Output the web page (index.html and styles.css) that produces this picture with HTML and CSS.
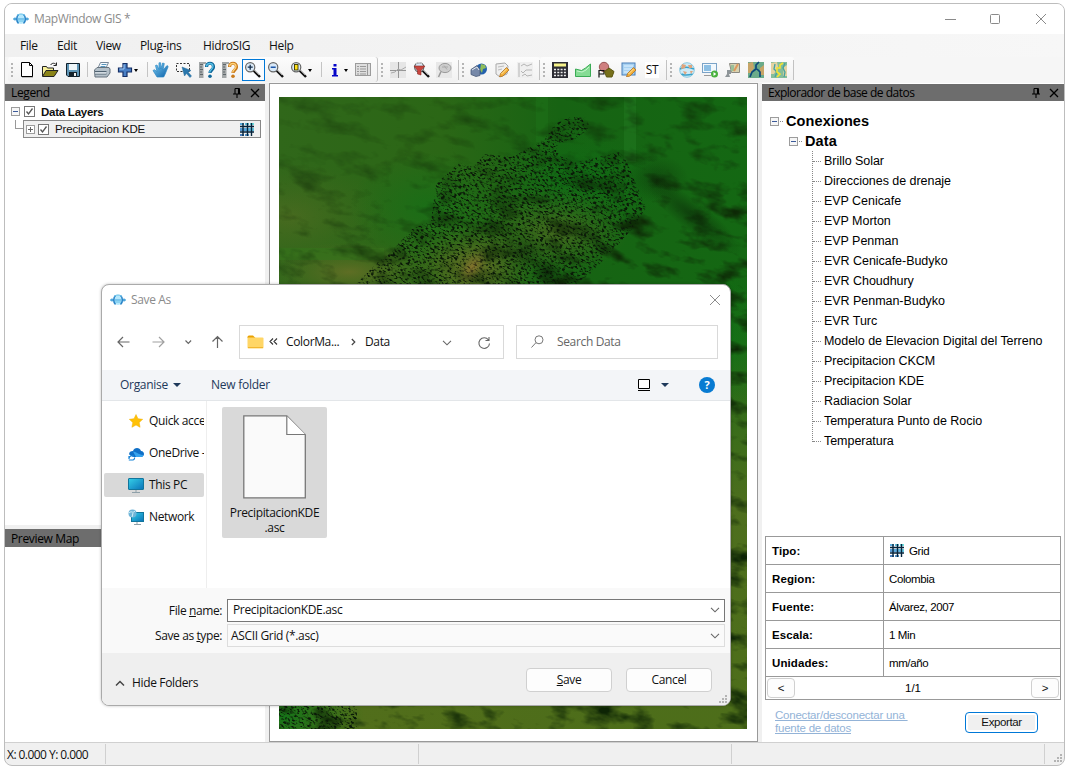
FILE: index.html
```html
<!DOCTYPE html>
<html lang="es">
<head>
<meta charset="utf-8">
<title>MapWindow GIS</title>
<link rel="stylesheet" href="styles.css">
</head>
<body>
<svg class="defs" width="0" height="0">
  <defs>
    <linearGradient id="gBlue" x1="0" y1="0" x2="1" y2="1"><stop offset="0" stop-color="#7fd0f5"/><stop offset="1" stop-color="#0a5fa8"/></linearGradient>
    <linearGradient id="gScreen" x1="0" y1="0" x2="1" y2="1"><stop offset="0" stop-color="#35d0e8"/><stop offset="1" stop-color="#0a72b8"/></linearGradient>
    <linearGradient id="gGrid" x1="1" y1="0" x2="0" y2="1"><stop offset="0" stop-color="#3fe0d8"/><stop offset=".5" stop-color="#2a96d8"/><stop offset="1" stop-color="#0b4fa8"/></linearGradient>
    <symbol id="logo" viewBox="0 0 16 14">
      <path d="M0 7h16" stroke="#5fb4e0" stroke-width="1.400"/>
      <path d="M2 5.500v3M14 5.500v3" stroke="#2f8fd0" stroke-width="1.200"/>
      <ellipse cx="8" cy="7" rx="4.600" ry="5" fill="#b6e8fc"/>
      <path d="M5.500 2.500C3.200 4.500 3.200 9.500 5.500 11.500M10.500 2.500c2.500 2 2.500 7 0 9" fill="none" stroke="#2a84c8" stroke-width="1.600"/>
      <path d="M4 3.500C6 1.500 10 1.500 12 3.500M5 9h6" fill="none" stroke="#63bfe9"/>
      <path d="M5 7h6" stroke="#3fa3dc"/>
    </symbol>
    <symbol id="grid" viewBox="0 0 14 13">
      <path d="M0 0h4v2H0zM5 0h4v2H5zM10 0h4v2h-4zM0 11h4v2H0zM5 11h4v2H5zM0 5h14v3H0z" fill="url(#gGrid)" opacity=".75"/>
      <path d="M3 0v13M7.500 0v13M11.500 0v13M0 3.500h14M0 9h14" stroke="#06243c" stroke-width="1.400"/>
    </symbol>
    <symbol id="lens" viewBox="0 0 18 18">
      <path d="M9.500 9.500L16 16" stroke="#111" stroke-width="2.400"/>
      <path d="M10 9l5 5" stroke="#bbb" stroke-width=".8"/>
      <circle cx="6.200" cy="6.200" r="4.600" fill="#d9e9f8" stroke="#666" stroke-width="1.200"/>
    </symbol>
    <symbol id="pencil" viewBox="0 0 10 10">
      <path d="M0 10l1-3.500L7 .5l2.500 2.500-6 6z" fill="#f4b13c" stroke="#a8681a" stroke-width=".7"/><path d="M2 7l5-5" stroke="#ffe6a0"/>
    </symbol>
    <symbol id="question" viewBox="0 0 18 18">
      <path d="M1 1h7v2H5.500v14H1z" fill="#a3a7a8"/><path d="M2 3.500h3M2 6h2M2 8.500h3M2 11h2M2 13.500h3" stroke="#5f676b"/>
      <path d="M8.500 6c0-5 7-5 7 0 0 3-3.500 3-3.500 6" fill="none" stroke-width="3.200" class="q-out"/>
      <path d="M8.500 5.500c.3-4 6.500-4 6.500 0 0 3-3.300 3-3.300 6" fill="none" stroke-width="1.300" class="q-in"/>
      <circle cx="12" cy="15.300" r="1.800" class="q-dot"/>
    </symbol>
    <symbol id="pin" viewBox="0 0 8 10"><path d="M2 .5h4.500M2 .5v5M5.500 .5v5M6.500 .5v5M0 6h8M4 6v4" fill="none" stroke="#000" stroke-width="1.100"/></symbol>
    <symbol id="close" viewBox="0 0 10 10"><path d="M1 1l8 8M9 1L1 9" stroke="#000" stroke-width="1.300"/></symbol>
    <symbol id="chev" viewBox="0 0 10 6"><path d="M1 .8l4 4 4-4" fill="none" stroke="#666" stroke-width="1.100"/></symbol>
    <symbol id="check" viewBox="0 0 11 11"><rect x=".5" y=".5" width="10" height="10" fill="#fff" stroke="#777"/><path d="M2.500 5.500l2 2.500 4-5.500" fill="none" stroke="#555" stroke-width="1.300"/></symbol>
    <symbol id="minus" viewBox="0 0 9 9"><rect x=".5" y=".5" width="8" height="8" fill="#f6f6f6" stroke="#9c9c9c"/><path d="M2 4.500h5" stroke="#3b5a9a"/></symbol>
    <symbol id="plus" viewBox="0 0 9 9"><rect x=".5" y=".5" width="8" height="8" fill="#fff" stroke="#9c9c9c"/><path d="M2 4.500h5M4.500 2v5" stroke="#666"/></symbol>
  </defs>
</svg>

<div class="window">
  <header class="titlebar">
    <svg class="logo" width="16" height="14"><use href="#logo"/></svg>
    <span class="title-text">MapWindow GIS *</span>
    <svg class="win-buttons" width="104" height="12" fill="none" stroke="#8a8a8a"><path d="M1 6.500h11M92 1l10 10M102 1L92 11"/><rect x="46.500" y="1.500" width="9" height="9" rx="1"/></svg>
  </header>
  <nav class="menubar">
    <span class="m-file">File</span><span class="m-edit">Edit</span><span class="m-view">View</span><span class="m-plug">Plug-ins</span><span class="m-hidro">HidroSIG</span><span class="m-help">Help</span>
  </nav>
  <div class="toolbar">
    <div class="strip strip-main">
      <i class="grip"></i>
      <span class="cell"><svg width="18" height="18"><path d="M4 2.500h8l3 3v11H4z" fill="#888"/><path d="M3.500 1.500h8l3 3v11h-11z" fill="#fff" stroke="#000"/><path d="M11.500 1.500v3h3" fill="none" stroke="#000"/></svg></span>
      <span class="cell"><svg width="18" height="18"><path d="M1.500 15V5.500h4l1 1.500h6v3" fill="#f7f09a" stroke="#222"/><path d="M1.500 15.500l3.500-6h12l-4 6z" fill="#8b8418" stroke="#222"/><path d="M9.500 4c2-2.500 4-2 5.500-.5M15.500 1.500V4.500H12.500" fill="none" stroke="#222"/></svg></span>
      <span class="cell"><svg width="18" height="18"><path d="M2.500 2.500h13v13H4l-1.500-1.500z" fill="#5f95b5" stroke="#10202c"/><rect x="5" y="3" width="8" height="6" fill="#eef6f9"/><rect x="5" y="11" width="8" height="4.500" fill="#16222a"/><rect x="10" y="12" width="2" height="3" fill="#eee"/></svg></span>
      <i class="sep"></i>
      <span class="cell"><svg width="18" height="18"><path d="M5 7l2.500-5.500h8L13 7" fill="#f7fbff" stroke="#789"/><path d="M1.500 9l2.500-2.500h12l1 1.500v4l-3 4h-12z" fill="#b4c0c9" stroke="#66737e"/><path d="M2 10.500h11.500M2 13h11.500" stroke="#506271"/><path d="M2 12h11" stroke="#eef4f8"/><path d="M8.500 3.500h5M7.500 5.500h5" stroke="#5796bd"/></svg></span>
      <span class="cell drop"><svg width="18" height="18"><path d="M7 2.500h4V7h4.500v4H11v4.500H7V11H2.500V7H7z" fill="#4a80c5" stroke="#152f66" stroke-width="1.200"/><path d="M8 3.500V8H3.500" fill="none" stroke="#a4ccf4"/></svg><b class="caret"></b></span>
      <i class="sep sep-r"></i>
      <span class="cell"><svg width="18" height="18"><path d="M5 16L1 9.500l1.500-.8 2.500 2L3.500 4.500l1.500-.5L7 8.500V1.800h1.700V8l2-6 1.600.5L11 9l4-4.500 1.200 1-3 7.500-1.500 3z" fill="url(#gBlue)" stroke="#2a86c4" stroke-width=".7"/></svg></span>
      <span class="cell"><svg width="18" height="18"><rect x="1.500" y="2.500" width="13" height="8" fill="none" stroke="#333" stroke-dasharray="2 1.500"/><path d="M7 6l9 3.500-3 1.500 3.500 4-1.500 1.500-3.500-4L9.500 15z" fill="#2a77ad" stroke="#286e9d" stroke-width=".5"/></svg></span>
      <span class="cell q-blue"><svg width="18" height="18"><use href="#question"/></svg></span>
      <span class="cell q-gold"><svg width="18" height="18"><use href="#question"/></svg></span>
      <span class="cell active"><svg width="18" height="18"><use href="#lens"/><path d="M3.700 6.200h5M6.200 3.700v5" stroke="#152d4a" stroke-width="1.300"/></svg></span>
      <span class="cell"><svg width="18" height="18"><use href="#lens"/><path d="M3.700 6.200h5" stroke="#1b55a8" stroke-width="1.500"/></svg></span>
      <span class="cell drop"><svg width="18" height="18"><use href="#lens"/><rect x="4.500" y="3.500" width="3.500" height="5.500" fill="#ffe21a" stroke="#3c3600" stroke-width=".9"/></svg><b class="caret"></b></span>
      <i class="sep sep-r"></i>
      <span class="cell drop info"><svg width="18" height="18"><path d="M7.500 3h3v2.500h-3zM6 7h4.500v7H12v1.500H6V14h1.500V8.500H6z" fill="#0505c8"/></svg><b class="caret"></b></span>
      <span class="cell"><svg width="18" height="18"><rect x="1.500" y="2.500" width="15" height="12" fill="#dedede" stroke="#9b9b9b"/><path d="M3 5.500h2M6 5.500h6M3 8h2M6 8h6M3 10.500h2M6 10.500h6M3 13h2M6 13h6M13.500 3v11" stroke="#999"/></svg></span>
    </div>
    <div class="strip strip-3">
      <i class="grip"></i>
      <span class="cell"><svg width="18" height="18"><rect x="1" y="1" width="16" height="16" fill="#e6e6e6"/><path d="M1 9.500h16M9.500 1v16" stroke="#959595"/><path d="M2 12l4-1 3-3 3 1 5-3" fill="none" stroke="#aaa"/></svg></span>
      <span class="cell"><svg width="18" height="18"><use href="#lens" x="1"/><path d="M2 5h11L9 9.500V14l-3.500-1V9.500z" fill="#c9453e" stroke="#8c2c27" stroke-width=".6"/><path d="M4 3c1-2 5-2 6 0" stroke="#ddd" fill="none"/></svg></span>
      <span class="cell"><svg width="18" height="18"><rect x="1" y="1" width="16" height="16" fill="#e8e8e8"/><ellipse cx="10" cy="7" rx="6" ry="4.600" fill="#cdcdcd" stroke="#9c9c9c"/><path d="M6 10.500L3.500 16" stroke="#999" stroke-width="1.500"/><path d="M7 6h6M9 4.500l3 4" stroke="#aaa"/></svg></span>
      <i class="edge"></i>
    </div>
    <div class="strip strip-3">
      <i class="grip"></i>
      <span class="cell"><svg width="18" height="18"><circle cx="11.500" cy="8" r="5.500" fill="#2461ad"/><path d="M11 3l4 1 1 3-3 1-1 4-2-3z" fill="#8fbd5a"/><path d="M1 8.500l6-4 3 4v6l-4 1-5-2z" fill="#7688a8" stroke="#4a5a78" stroke-width=".8"/><path d="M2 9l5-3 2 3" stroke="#dde6ef" fill="none"/></svg></span>
      <span class="cell"><svg width="18" height="18"><path d="M3 3l9-1 3 3-1 8-7 3-4-3z" fill="#efefef" stroke="#aaa"/><path d="M5 6l6-1M5 9l4-1" stroke="#bbb"/><use href="#pencil" x="6" y="6" width="11" height="10"/></svg></span>
      <span class="cell"><svg width="18" height="18"><rect x="1" y="1" width="16" height="16" fill="#efefef"/><path d="M3 2v14M5 5l3-2 3 2 5-2M5 10l2 2 3-3h6M6 15l3-2 2 2 5-1" fill="none" stroke="#b5b5b5"/></svg></span>
      <i class="edge"></i>
    </div>
    <div class="strip strip-5">
      <i class="grip"></i>
      <span class="cell"><svg width="18" height="18"><rect x="1" y="1" width="16" height="16" fill="#2c2c34"/><rect x="3" y="2.500" width="12" height="3" fill="#f6f28a"/><path d="M3 8.500h12M3 11.500h12M3 14.500h12" stroke="#ececec" stroke-width="1.700" stroke-dasharray="2 1.300"/></svg></span>
      <span class="cell"><svg width="18" height="18"><path d="M1.500 15.500V8l6 1.500 4-2.500 5-4v12.500z" fill="#85dc94" stroke="#3aab55"/><path d="M3 10l5 1 4-2 3-3" fill="none" stroke="#c6f5cc"/></svg></span>
      <span class="cell"><svg width="18" height="18"><circle cx="7" cy="6" r="4.700" fill="#cf8080" stroke="#955"/><path d="M2 16.500v-7h5v3.500H2" fill="none" stroke="#111" stroke-width="1.200"/><path d="M12 7l5 3.500-2 5.500H9.500l-2-5.500z" fill="#77701b" stroke="#5d5812"/></svg></span>
      <span class="cell"><svg width="18" height="18"><rect x="2" y="2" width="13" height="12" fill="#a8d2f2" stroke="#4a7fb8"/><path d="M4 5h9M4 8h8M4 11h5" stroke="#e2f3ff"/><use href="#pencil" x="6" y="6" width="11" height="10"/></svg></span>
      <span class="cell"><span class="st">ST</span></span>
      <i class="edge"></i>
    </div>
    <div class="strip strip-5">
      <i class="grip"></i>
      <span class="cell"><svg width="18" height="18"><circle cx="9" cy="9" r="7.300" fill="#cdeaf6" stroke="#8cc8de"/><path d="M2 8c5-3 9-2 14 0M3.500 13c4 2 8 1 11 0" fill="none" stroke="#38a3cc" stroke-width="1.500"/><path d="M4 3l4 1-1 3-4 1zM10 4h4v3h-3zM5 10l4 1-2 3zM12 10l3 0-2 3z" fill="#e0a57d"/></svg></span>
      <span class="cell"><svg width="18" height="18"><rect x="1.500" y="2.500" width="14" height="9" fill="#f2f8fc" stroke="#7ba3c7"/><path d="M3 4h7v6H3z" fill="#8cbfe4"/><path d="M3 14.500h7" stroke="#999"/><circle cx="13.500" cy="13" r="3.500" fill="#48b13d"/><path d="M12.500 11v4l2.800-2z" fill="#fff"/></svg></span>
      <span class="cell"><svg width="18" height="18"><path d="M5.500 2.500h10v9h-8z" fill="#d8d2b0" stroke="#8b8a82"/><path d="M7 4h3v6H7z" fill="#9bc09a"/><path d="M10 10l4-7" stroke="#dd9a5e" stroke-width="2"/><path d="M3 9h4v4H3zM3 13l-2 3h5l-1-3z" fill="#8e9598"/></svg></span>
      <span class="cell"><svg width="18" height="18"><path d="M1 1h16v16H1z" fill="#6bab8a"/><path d="M1 2l5-1 1 6-3 5H1zM13 7l4-3v10h-4z" fill="#c7a567"/><path d="M12 1L9 4v4l-4 3-2 5M10 8l3 3v5" fill="none" stroke="#0d4779" stroke-width="1.700"/></svg></span>
      <span class="cell"><svg width="18" height="18"><path d="M1 1h16v16H1z" fill="#85bd9a"/><path d="M1 2l6-1 1 5-4 7H1zM14 6l3-2v11h-4z" fill="#e5d3a0"/><path d="M5 3l-1 5 3 3-2 5M15 2l-2 5 2 4-1 5" fill="none" stroke="#45a3a0" stroke-width="1.300"/><path d="M13 2l-3 2v3H7v4l3 2-3 3" fill="none" stroke="#f2e332" stroke-width="1.600"/></svg></span>
      <i class="edge"></i>
    </div>
  </div>

  <main class="workspace">
    <aside class="left">
      <section class="legend">
        <div class="pane-head"><span class="h-legend">Legend</span><svg width="8" height="10"><use href="#pin"/></svg><svg width="10" height="10"><use href="#close"/></svg></div>
        <div class="layer-root"><svg width="9" height="9"><use href="#minus"/></svg><svg width="11" height="11"><use href="#check"/></svg><b class="t-layers">Data Layers</b></div>
        <div class="layer-line">
          <i class="elbow"></i>
          <div class="layer"><svg width="9" height="9"><use href="#plus"/></svg><svg width="11" height="11"><use href="#check"/></svg><span class="t-kde">Precipitacion KDE</span><svg class="layer-grid" width="14" height="13"><use href="#grid"/></svg></div>
        </div>
      </section>
      <section class="preview"><div class="pane-head"><span class="h-preview">Preview Map</span></div></section>
    </aside>

    <section class="map-frame">
      <svg class="map" width="468" height="632" viewBox="0 0 468 632">
        <defs>
          <linearGradient id="base" x1="0" y1="0" x2="1" y2="0"><stop offset="0" stop-color="#30671a"/><stop offset=".35" stop-color="#2b6716"/><stop offset=".6" stop-color="#176313"/><stop offset="1" stop-color="#146813"/></linearGradient>
          <linearGradient id="low" x1="0" y1="0" x2="0" y2="1"><stop offset=".3" stop-color="#5f7222" stop-opacity="0"/><stop offset=".65" stop-color="#5c7020" stop-opacity=".8"/><stop offset="1" stop-color="#576f1b" stop-opacity=".85"/></linearGradient>
          <radialGradient id="warm"><stop offset="0" stop-color="#a77836" stop-opacity=".8"/><stop offset="1" stop-color="#74682a" stop-opacity="0"/></radialGradient>
          <radialGradient id="green"><stop offset="0" stop-color="#077517" stop-opacity=".8"/><stop offset="1" stop-color="#087515" stop-opacity="0"/></radialGradient>
          <radialGradient id="dark"><stop offset="0" stop-color="#061204" stop-opacity=".7"/><stop offset="1" stop-color="#0b2406" stop-opacity="0"/></radialGradient>
          <filter id="relief" x="0" y="0" width="1" height="1" color-interpolation-filters="sRGB">
            <feTurbulence type="fractalNoise" baseFrequency=".03 .06" numOctaves="4" seed="8"/>
            <feColorMatrix values="0 0 0 0 .05  0 0 0 0 .14  0 0 0 0 .02  2.800 0 0 0 -1.380"/>
          </filter>
          <filter id="rough" x="0" y="0" width="1" height="1" color-interpolation-filters="sRGB">
            <feTurbulence type="fractalNoise" baseFrequency=".3 .62" numOctaves="2" seed="21"/>
            <feColorMatrix values="0 0 0 0 .04  0 0 0 0 .1  0 0 0 0 .03  6 0 0 0 -2.950"/>
          </filter>
          <linearGradient id="fade" x1="0" y1="0" x2=".3" y2="1"><stop offset="0" stop-color="#4a4a4a"/><stop offset=".2" stop-color="#777"/><stop offset=".45" stop-color="#fff"/></linearGradient>
          <mask id="fadeMask"><rect width="468" height="632" fill="url(#fade)"/></mask>
          <clipPath id="country"><path d="M293 19l14 2 4 10-15 11-17 5-2 8 18 11 46-11 6 8 20 48-15 22-18 20-22 23-24 18-20 60-60 110-120 40-10 200 0 30H0V330l40-100 37-43 22-22 10-7 24-26 19-8 5-37 23-21 14 4 12-13 27 3 33-18 10-15z"/></clipPath>
        </defs>
        <rect width="468" height="632" fill="url(#base)"/>
        <rect width="468" height="632" fill="url(#low)"/>
        <ellipse cx="10" cy="120" rx="100" ry="55" fill="url(#warm)" opacity=".25"/>
        <ellipse cx="70" cy="175" rx="85" ry="30" fill="url(#warm)" opacity=".5"/>
        <ellipse cx="195" cy="170" rx="60" ry="45" fill="url(#warm)" opacity=".65"/>
        <ellipse cx="280" cy="132" rx="70" ry="45" fill="url(#warm)" opacity=".42"/>
        <ellipse cx="150" cy="110" rx="80" ry="55" fill="url(#green)" opacity=".6"/>
        <ellipse cx="300" cy="85" rx="90" ry="55" fill="url(#green)" opacity=".5"/>
        <ellipse cx="445" cy="245" rx="70" ry="70" fill="url(#green)" opacity=".7"/>
        <rect x="257" width="12" height="45" fill="#207f1d" opacity=".3"/>
        <rect x="345" width="12" height="65" fill="#247d24" opacity=".45"/>
        <rect y="151" width="105" height="12" fill="#34721b" opacity=".7"/>
        <ellipse cx="5" cy="620" rx="80" ry="50" fill="url(#green)"/>
        <g mask="url(#fadeMask)"><g transform="rotate(12 234 316)"><rect x="-90" y="-60" width="650" height="760" filter="url(#relief)"/></g></g>
        <ellipse cx="378" cy="82" rx="32" ry="24" fill="url(#dark)" opacity=".5"/>
        <ellipse cx="415" cy="120" rx="60" ry="15" transform="rotate(38 415 120)" fill="url(#dark)" opacity=".7"/>
        <g clip-path="url(#country)"><g transform="rotate(28 230 130)"><rect x="-80" y="-120" width="660" height="880" filter="url(#rough)"/></g></g>
        <ellipse cx="268" cy="175" rx="16" ry="13" fill="url(#dark)"/>
        <ellipse cx="247" cy="155" rx="22" ry="20" fill="url(#dark)" opacity=".5"/>
        <ellipse cx="193" cy="170" rx="11" ry="22" transform="rotate(35 193 170)" fill="url(#warm)" opacity=".55"/>
      </svg>
    </section>

    <aside class="right">
      <div class="pane-head"><span class="h-explorer">Explorador de base de datos</span><svg width="8" height="10"><use href="#pin"/></svg><svg width="10" height="10"><use href="#close"/></svg></div>
      <div class="tree">
        <div class="node root"><svg width="9" height="9"><use href="#minus"/></svg><i></i><b class="t-con">Conexiones</b></div>
        <div class="node data"><svg width="9" height="9"><use href="#minus"/></svg><i></i><b class="t-data">Data</b></div>
        <ul class="leaves">
          <li>Brillo Solar</li><li>Direcciones de drenaje</li><li>EVP Cenicafe</li><li>EVP Morton</li><li>EVP Penman</li><li>EVR Cenicafe-Budyko</li><li>EVR Choudhury</li><li>EVR Penman-Budyko</li><li>EVR Turc</li><li>Modelo de Elevacion Digital del Terreno</li><li>Precipitacion CKCM</li><li>Precipitacion KDE</li><li>Radiacion Solar</li><li>Temperatura Punto de Rocio</li><li>Temperatura</li>
        </ul>
      </div>
      <div class="details">
        <div class="row"><b>Tipo:</b><span><svg width="14" height="13"><use href="#grid"/></svg>Grid</span></div>
        <div class="row"><b>Region:</b><span>Colombia</span></div>
        <div class="row"><b>Fuente:</b><span>Álvarez, 2007</span></div>
        <div class="row"><b>Escala:</b><span>1 Min</span></div>
        <div class="row"><b>Unidades:</b><span>mm/año</span></div>
        <div class="pager"><button>&lt;</button><span>1/1</span><button>&gt;</button></div>
      </div>
      <div class="actions"><a>Conectar/desconectar una&nbsp;<br>fuente de datos</a><button class="export">Exportar</button></div>
    </aside>
  </main>

  <footer class="status">
    <span class="s1">X: 0.000 Y: 0.000</span><span class="s2"></span><span class="s3"></span><span class="s4"></span>
    <svg width="9" height="9" fill="#b4b4b4"><path d="M6 0h2v2H6zM3 3h2v2H3zM6 3h2v2H6zM0 6h2v2H0zM3 6h2v2H3zM6 6h2v2H6z"/></svg>
  </footer>
</div>

<div class="dialog">
  <div class="d-title"><svg class="logo" width="16" height="14"><use href="#logo"/></svg><span class="t-saveas">Save As</span><svg width="12" height="12"><path d="M1 1l10 10M11 1L1 11" stroke="#8c8c8c"/></svg></div>
  <div class="d-nav">
    <svg class="arrows" width="112" height="14" fill="none" stroke="#666" stroke-width="1.200"><path d="M13.500 7H2M7 2L2 7l5 5M101.500 13V1.500M96.500 6.500l5-5 5 5"/><path d="M36.500 7H48M43 2l5 5-5 5" stroke="#a0a0a0"/><path d="M69.500 5.500l2.800 2.800 2.800-2.800"/></svg>
    <div class="address">
      <svg width="17" height="14"><path d="M.5 2Q.5 .5 2 .5h4L8.500 3h-8z" fill="#e9a100"/><rect x=".5" y="2.500" width="16" height="11" rx="1" fill="#ffd666"/><path d="M1 12.500h15" stroke="#f2b630"/></svg>
      <svg class="dbl" width="9" height="7" fill="none" stroke="#333" stroke-width="1.100"><path d="M4 .5l-3 3 3 3M8 .5l-3 3 3 3"/></svg>
      <span class="t-color">ColorMa...</span>
      <svg class="gt" width="5" height="8"><path d="M.8 1l3 3-3 3" fill="none" stroke="#444" stroke-width="1.200"/></svg>
      <span class="t-crumb">Data</span>
      <svg class="a-chev" width="10" height="6"><use href="#chev"/></svg>
      <svg class="reload" width="14" height="14" fill="none" stroke="#666" stroke-width="1.100"><path d="M11.500 4A5.300 5.300 0 1 0 12.500 7.500M12 1v3.500H8.500"/></svg>
    </div>
    <div class="search"><svg width="13" height="13" fill="none" stroke="#777"><circle cx="8" cy="4.800" r="4"/><path d="M5 7.600L.5 12.500"/></svg><span class="t-search">Search Data</span></div>
  </div>
  <div class="d-tools">
    <span class="t-org">Organise</span><b class="tri"></b><span class="t-new">New folder</span>
    <svg class="view" width="12" height="12" fill="#fff" stroke="#000"><path d="M.5 .5h11v9H.5zM0 11.500h12"/></svg><b class="tri tri2"></b>
    <span class="help">?</span>
  </div>
  <div class="d-body">
    <div class="places">
      <div class="place"><svg width="16" height="16"><path d="M8 1.500l2 4.200 4.700.6-3.500 3.200.9 4.800L8 12l-4.100 2.300.9-4.800-3.500-3.200 4.700-.6z" fill="#ffc107" stroke="#f0b000" stroke-width=".5"/></svg><span class="p-quick">Quick access</span></div>
      <div class="place"><svg width="16" height="16"><path d="M3.500 11C-.5 10 1 6 5 6c1-4 7-4 8 0 4 0 4 6 0 6H5z" fill="#0f6fc6"/><path d="M5 6.500c3 0 5 3 10.300 3.500-.8 2-1.800 2-2.800 2H8z" fill="#35a3ee"/><path d="M1 13.500a3 3 0 0 1 5-2M.8 15h4a2 2 0 0 0 1.700-2.500M1 11v3" fill="none" stroke="#1583d8" stroke-width="1.200"/></svg><span class="p-one">OneDrive - Personal</span></div>
      <div class="place selected"><svg width="16" height="16"><rect x=".5" y="1.500" width="15" height="11" rx=".5" fill="url(#gScreen)" stroke="#12759c"/><path d="M8 13v2M4 15.500h8" stroke="#8fa0a9"/></svg><span class="p-pc">This PC</span></div>
      <div class="place"><svg width="16" height="16"><rect x="3.500" y="3.500" width="12" height="9" fill="url(#gScreen)" stroke="#12759c"/><path d="M9 13v2M6 15.500h7" stroke="#8fa0a9"/><circle cx="4.500" cy="4.500" r="4" fill="#6fb4d8"/><path d="M1 4c3-3 3 1 6-2M4 8l1-4" stroke="#d3f0f6" fill="none"/></svg><span class="p-net">Network</span></div>
    </div>
    <div class="files">
      <div class="file"><svg width="64" height="84"><path d="M.8 .8h43l18.500 19v63H.8z" fill="#fafafa" stroke="#777" stroke-width="1.300"/><path d="M43.800 1v18.500h18.500" fill="#fff" stroke="#777" stroke-width="1.200"/></svg><span class="f-name">PrecipitacionKDE<br>.asc</span></div>
    </div>
  </div>
  <div class="d-fields">
    <label>File <u>n</u>ame:</label><div class="field input"><span class="t-input">PrecipitacionKDE.asc</span><svg width="10" height="6"><use href="#chev"/></svg></div>
    <label class="l-type">Save as <u>t</u>ype:</label><div class="field"><span class="t-type">ASCII Grid (*.asc)</span><svg width="10" height="6"><use href="#chev"/></svg></div>
  </div>
  <div class="d-foot">
    <svg width="10" height="7"><path d="M1 5.500l4-4 4 4" fill="none" stroke="#444" stroke-width="1.500"/></svg><span class="t-hide">Hide Folders</span>
    <button class="b-save"><u>S</u>ave</button><button class="b-cancel">Cancel</button>
    <svg class="d-grip" width="9" height="9" fill="#b4b4b4"><path d="M6 0h2v2H6zM3 3h2v2H3zM6 3h2v2H6zM0 6h2v2H0zM3 6h2v2H3zM6 6h2v2H6z"/></svg>
  </div>
</div>
</body>
</html>
```
FILE: styles.css
```css
* { box-sizing: border-box; }
html, body { margin: 0; width: 1066px; height: 769px; overflow: hidden; background: #fff; }
body { padding: 3px 0 0 4px; font: 12px/16px "Open Sans", "Noto Sans", sans-serif; letter-spacing: -.35px; color: #111; }
.defs { position: absolute; }
svg { flex: none; display: block; }
span, b { white-space: nowrap; }
button { font: inherit; letter-spacing: inherit; color: #111; padding: 0; background: #fdfdfd; border: 1px solid #d0d0d0; border-radius: 4px; }

.window { width: 1061px; height: 763px; border: 1px solid #bdbdbd; border-radius: 8px; overflow: hidden; background: #f0f0f0; display: flex; flex-direction: column; }
.titlebar { height: 30px; flex: none; background: #fff; display: flex; align-items: center; padding-left: 8px; color: #8b8b8b; }
.title-text { margin-left: 5px; }
.win-buttons { margin-left: auto; margin-right: 16px; margin-top: -1px; }
.menubar { height: 23px; flex: none; background: linear-gradient(90deg, #f0f0f0, #f7f7f7); display: flex; align-items: center; padding-left: 15px; }
.m-file { width: 37px; }
.m-edit { width: 39px; }
.m-view { width: 44px; }
.m-plug { width: 63px; }
.m-hidro { width: 66px; }

.toolbar { height: 26px; flex: none; display: flex; background: #f6f6f6; padding-left: 3px; }
.strip { height: 25px; display: flex; align-items: center; background: linear-gradient(#fcfcfc, #f1f1f1); border-radius: 3px; }
.strip-main { width: 370px; border-right: 1px solid #c3c3c3; }
.strip-3 { width: 81px; }
.strip-5 { width: 127px; }
.grip { width: 2px; height: 14px; margin: 0 3.500px 0 3px; background: repeating-linear-gradient(#b5b5b5 0 2px, transparent 2px 4px); flex: none; }
.strip-main .grip { margin-right: 2.500px; }
.cell { width: 23px; height: 22px; flex: none; display: flex; align-items: center; justify-content: center; }
.drop { width: 29px; justify-content: flex-start; padding-left: 2px; }
.info { width: 28px; }
.active { border: 1px solid #0078d7; background: #fafcff; }
.caret { border: 2.500px solid transparent; border-top: 3px solid #000; border-bottom: 0; margin-top: 1px; }
.sep { width: 1px; height: 15px; background: #c4c4c4; margin: 0 3px 0 2px; flex: none; }
.sep-r { margin: 0 2px 0 4px; }
.edge { width: 1px; height: 20px; background: #c2c2c2; margin-left: auto; }
.st { background: #fff; padding: 0 1px; }
.q-blue { --q-out: #0f6799; --q-in: #5cc3e8; }
.q-gold { --q-out: #c97a1c; --q-in: #ffd27a; }
.q-out { stroke: var(--q-out); }
.q-in { stroke: var(--q-in); }
.q-dot { fill: var(--q-out); }

.workspace { height: 659px; flex: none; display: grid; grid-template-columns: 260px 489px 302px; column-gap: 4px; }
.left { display: flex; flex-direction: column; gap: 4px; padding-top: 1px; }
.legend { height: 441px; background: #fff; flex: none; }
.preview { flex: 1; background: #fff; }
.pane-head { height: 17px; background: #6d6d6d; display: flex; align-items: center; gap: 9px; padding: 0 5px 0 6px; color: #000; flex: none; }
.pane-head span { margin-right: auto; }
.h-explorer { letter-spacing: -.5px; }
.preview .pane-head { height: 18px; padding-top: 2px; }
.layer-root { height: 19px; display: flex; align-items: center; padding: 2px 0 0 6px; gap: 4px; font: bold 11.5px/16px "Liberation Sans", sans-serif; letter-spacing: -.25px; }
.t-layers { margin-left: 2px; }
.layer-line { display: flex; padding-left: 10px; }
.elbow { width: 8px; height: 9px; border: solid #999; border-width: 0 0 1px 1px; }
.layer { width: 238px; height: 18px; border: 1px solid #888; background: #f0f0f0; display: flex; align-items: center; padding: 0 6px 0 2px; gap: 3px; font: 11.5px/16px "Liberation Sans", sans-serif; letter-spacing: -.15px; }
.t-kde { margin-left: 3px; margin-right: auto; }

.map-frame { background: #fff; border: 1px solid #999; padding: 13px 0 0 9px; }

.right { background: #fff; width: 302px; padding-top: 1px; display: flex; flex-direction: column; }
.right .pane-head { padding-right: 5px; }
.tree { height: 435px; padding: 10px 0 0 8px; font: 12.5px/20px "Liberation Sans", sans-serif; letter-spacing: -.04px; color: #000; flex: none; }
.node { height: 20px; display: flex; align-items: center; font-size: 14.5px; letter-spacing: .1px; }
.node i { width: 3px; border-top: 1px dotted #888; margin: 0 3px 0 1px; }
.data { margin-left: 19px; }
.leaves { list-style: none; margin: 0 0 0 42px; padding: 0; height: 291px; border-left: 1px dotted #888; }
.leaves li { height: 20px; display: flex; align-items: center; white-space: nowrap; }
.leaves li::before { content: ""; width: 8px; border-top: 1px dotted #888; margin-right: 3px; }

.details { width: 296px; height: 164px; margin-left: 3px; border: 1px solid #999; font: 11.5px/16px "Liberation Sans", sans-serif; letter-spacing: -.4px; color: #000; flex: none; }
.row { height: 28px; display: flex; border-bottom: 1px solid #999; }
.row b { width: 118px; border-right: 1px solid #999; display: flex; align-items: center; padding-left: 6px; letter-spacing: .1px; }
.row span { display: flex; align-items: center; gap: 5px; padding-left: 5px; }
.row span svg { margin-left: 1px; }
.pager { height: 22px; display: flex; align-items: center; justify-content: space-between; padding: 0 1px; letter-spacing: 0; }
.pager button { width: 28px; height: 20px; line-height: 17px; }
.actions { display: flex; align-items: center; padding: 2px 26px 0 13px; justify-content: space-between; flex: 1; font: 11.5px/13px "Liberation Sans", sans-serif; letter-spacing: -.22px; }
.actions a { color: #93b3d7; text-decoration: underline; }
.export { width: 73px; height: 21px; border-color: #0078d7; box-shadow: inset 0 0 0 2px #fff; background: #f0f0f0; font-size: 11.5px; letter-spacing: -.4px; }

.status { flex: 1; border-top: 1px solid #d0d0d0; display: flex; align-items: center; }
.status span { height: 20px; line-height: 22px; border-right: 1px solid #d0d0d0; }
.status .s1 { width: 101px; padding-left: 2px; letter-spacing: -.55px; }
.s2, .s3, .s4 { width: 313px; }
.status svg { align-self: flex-end; margin: 0 0 2px 9px; }

.dialog { position: absolute; left: 101px; top: 284px; width: 630px; height: 422px; border: 1px solid #aaa; border-radius: 8px; overflow: hidden; background: #fff; display: flex; flex-direction: column; box-shadow: 0 0 3px rgba(0,0,0,.25); }
.d-title { height: 30px; display: flex; align-items: center; padding: 0 9px 1px 8px; color: #8b8b8b; flex: none; }
.t-saveas { margin: 0 auto 0 5px; }
.d-nav { height: 55px; display: flex; align-items: center; padding: 0 0 2px 14px; flex: none; }
.address, .search { height: 34px; border: 1px solid #d9d9d9; display: flex; align-items: center; }
.address { width: 265px; margin-left: 11px; padding-left: 7px; }
.dbl { margin: 0 8px 0 5px; }
.t-color { width: 65px; }
.gt { margin-right: 9px; }
.t-crumb { width: 77px; }
.a-chev { margin-right: 25px; margin-top: 2px; }
.reload { margin-top: 2px; }
.search { width: 202px; margin-left: 12px; padding-left: 14px; color: #666; }
.t-search { margin-left: 13px; }
.d-tools { height: 31px; flex: none; background: #f3f5f8; border-bottom: 1px solid #e3e6e9; display: flex; align-items: center; padding: 0 15px 0 18px; color: #1e395b; }
.t-org { width: 48px; letter-spacing: -.3px; }
.tri { border: 4px solid transparent; border-top: 4px solid #1e395b; border-bottom: 0; margin-left: 5px; }
.t-new { margin-left: 30px; letter-spacing: -.25px; }
.view { margin-left: auto; }
.tri2 { margin: 0 30px 0 11px; }
.help { width: 16px; height: 16px; border-radius: 8px; background: #087bd2; color: #fff; text-align: center; font-weight: bold; font-size: 11px; }
.d-body { height: 187px; flex: none; display: flex; }
.places { width: 105px; border-right: 1px solid #eee; padding: 8px 2px 0; overflow: hidden; }
.place { width: 100px; height: 24px; margin-bottom: 8px; display: flex; align-items: center; gap: 5px; padding-left: 24px; overflow: hidden; }
.selected { background: #d9d9d9; border-radius: 2px; }
.files { padding: 6px 15px; }
.file { width: 105px; height: 131px; background: #d9d9d9; border-radius: 2px; display: flex; flex-direction: column; align-items: center; padding-top: 8px; }
.f-name { text-align: center; line-height: 15px; margin-top: 6px; }
.d-fields { height: 65px; flex: none; background: #f9f9f9; display: grid; grid-template-columns: 120px 498px; grid-template-rows: 23px 23px; column-gap: 5px; row-gap: 2px; padding-top: 11px; align-items: center; }
.d-fields label { text-align: right; letter-spacing: -.4px; }
.field { height: 23px; border: 1px solid #ddd; display: flex; align-items: center; justify-content: space-between; padding: 0 4px 0 3px; background: #fafafa; }
.input { border-color: #777; background: #fff; padding-left: 5px; padding-bottom: 2px; }
.d-foot { flex: 1; background: #efefef; display: flex; align-items: center; padding-left: 13px; padding-top: 1px; position: relative; }
.t-hide { margin: 6px auto 0 7px; }
.d-foot > svg:first-child { margin-top: 8px; }
.d-foot button { width: 86px; height: 24px; }
.b-save { margin-right: 14px; }
.b-cancel { margin-right: 18px; }
.d-grip { position: absolute; right: 2px; bottom: 1px; }
```
